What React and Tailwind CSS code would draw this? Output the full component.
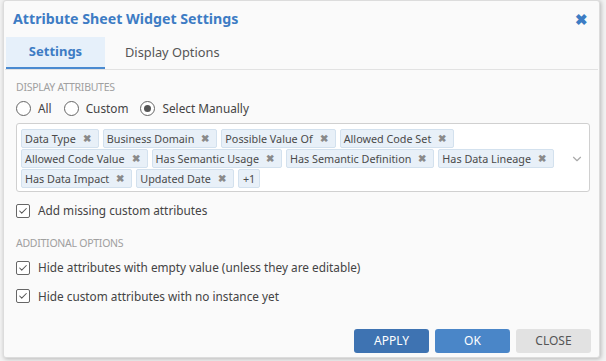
import { Check, ChevronDown } from 'lucide-react'

const TAGS = [
  ['Data Type', 'Business Domain', 'Possible Value Of', 'Allowed Code Set'],
  ['Allowed Code Value', 'Has Semantic Usage', 'Has Semantic Definition', 'Has Data Lineage'],
  ['Has Data Impact', 'Updated Date'],
]

const Tag = ({ label }) => (
  <span className="flex items-center whitespace-nowrap h-[19px] pl-[3px] pr-[7px] gap-[7px] bg-[#e8f0f8] border border-[#d3e1ee] rounded-[2px] text-[10.8px] text-[#4a4a4a] leading-none">
    {label}
    <span className="text-[#8a8a8a] text-[9.5px] font-bold">✖</span>
  </span>
)

const Radio = ({ label, checked }) => (
  <label className="flex items-center gap-[7px]">
    <span className="w-[15px] h-[15px] rounded-full border-[1.5px] border-[#666] flex items-center justify-center bg-white">
      {checked && <span className="w-[7px] h-[7px] rounded-full bg-[#555]" />}
    </span>
    {label}
  </label>
)

const CheckRow = ({ label }) => (
  <div className="flex items-center gap-[8px] text-[11.8px] text-[#444]">
    <span className="w-[14px] h-[14px] rounded-[2px] border-[1.5px] border-[#666] flex items-center justify-center bg-white">
      <Check size={10} strokeWidth={2.5} className="text-[#555]" />
    </span>
    {label}
  </div>
)

export default function App() {
  return (
    <div className="w-[606px] h-[361px] bg-[#f2f2f2] pl-[3px] pr-[6px] pb-[3px]" style={{ fontFamily: '"Noto Sans", "Open Sans", sans-serif' }}>
      <div className="h-full bg-[#fafafa] border border-[#dcdcdc] rounded-[3px] shadow-[1px_1px_4px_rgba(0,0,0,0.25)] flex flex-col">
        {/* Header */}
        <div className="flex items-center justify-between h-[36px] pl-[9px] pr-[11px]">
          <h1 className="text-[14.2px] font-bold text-[#3d7cc4]">Attribute Sheet Widget Settings</h1>
          <span className="text-[#3d7cc4] text-[15px] font-bold leading-none">✖</span>
        </div>

        {/* Tabs */}
        <div className="flex border-b border-[#e2e2e2] mx-[1px] h-[33px]">
          <div className="w-[99px] ml-[1px] flex items-center justify-center bg-[#e6f0fa] border-b-2 border-[#4a8ad0] text-[13px] font-bold text-[#3d7cc4]">
            Settings
          </div>
          <div className="pl-[20px] flex items-center text-[12.8px] text-[#555]">Display Options</div>
        </div>

        <div className="flex flex-col px-[12px] text-[11.8px] text-[#444]">
          <div className="mt-[10px] text-[10.5px] text-[#a0a0a0] tracking-tight">DISPLAY ATTRIBUTES</div>
          <div className="flex items-center gap-[12px] mt-[4px]">
            <Radio label="All" />
            <Radio label="Custom" />
            <Radio label="Select Manually" checked />
          </div>

          <div className="mt-[6px] -mr-[3px] flex bg-white border border-[#d0d0d0] rounded-[3px] pl-[4px] pt-[5px] pb-[3px]">
            <div className="flex-1 flex flex-col gap-[1px]">
              {TAGS.map((row, i) => (
                <div key={i} className="flex gap-[4px]">
                  {row.map((t) => <Tag key={t} label={t} />)}
                  {i === 2 && (
                    <span className="flex items-center h-[19px] px-[4px] bg-[#e8f0f8] border border-[#d3e1ee] rounded-[2px] text-[10.8px] text-[#4a4a4a]">+1</span>
                  )}
                </div>
              ))}
            </div>
            <div className="w-[24px] flex items-center justify-center">
              <ChevronDown size={14} className="text-[#aaa]" />
            </div>
          </div>

          <div className="mt-[10px]">
            <CheckRow label="Add missing custom attributes" />
          </div>

          <div className="mt-[16px] text-[10.5px] text-[#a0a0a0] tracking-tight">ADDITIONAL OPTIONS</div>
          <div className="mt-[7px] flex flex-col gap-[11px]">
            <CheckRow label="Hide attributes with empty value (unless they are editable)" />
            <CheckRow label="Hide custom attributes with no instance yet" />
          </div>
        </div>

        {/* Footer */}
        <div className="mt-auto mb-[4px] flex justify-end gap-[6px] pr-[8px]">
          <button className="w-[75px] h-[24px] rounded-[3px] bg-[#3e73b2] text-white text-[12px]">APPLY</button>
          <button className="w-[75px] h-[24px] rounded-[3px] bg-[#4a86c8] text-white text-[12px]">OK</button>
          <button className="w-[75px] h-[24px] rounded-[3px] bg-[#e2e2e2] text-[#555] text-[12px]">CLOSE</button>
        </div>
      </div>
    </div>
  )
}
